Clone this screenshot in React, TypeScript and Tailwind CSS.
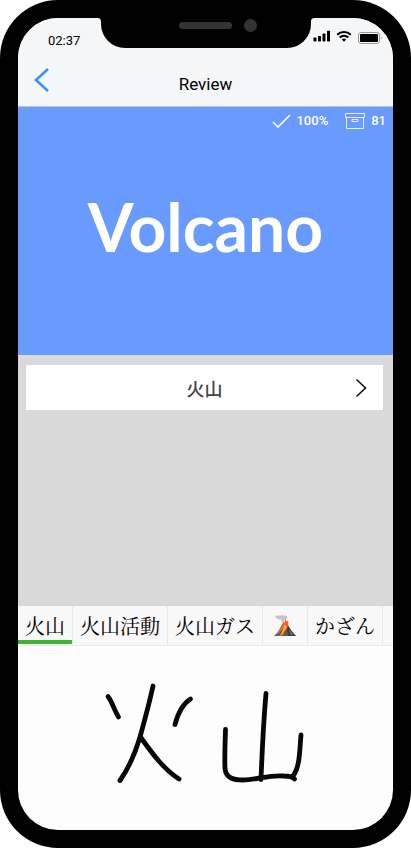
import type { ReactNode } from "react";

function StatusBar() {
  return (
    <div className="flex h-[30px] justify-between">
      <time className="w-[83px] pt-[15px] pl-[30px] font-[Roboto,sans-serif] text-[13px] leading-4 text-black">
        02:37
      </time>
      <div className="relative mx-auto flex w-[210px] items-start justify-center rounded-b-[24px] bg-black">
        <svg className="absolute top-0 -left-1 size-1" viewBox="0 0 4 4" aria-hidden="true">
          <path d="M0 0h4v4C4 1 3 0 0 0Z" />
        </svg>
        <svg className="absolute top-0 -right-1 size-1" viewBox="0 0 4 4" aria-hidden="true">
          <path d="M4 0H0v4C0 1 1 0 4 0Z" />
        </svg>
        <span className="mt-1 ml-[24px] h-[7px] w-[53px] rounded-full bg-[#333]" />
        <span className="mt-px ml-3 size-[13px] rounded-full bg-[#333]" />
      </div>
      <svg className="mt-3 mr-[9px] h-4 w-[73px]" viewBox="0 0 73 16" aria-hidden="true">
        <g>
          <rect x="2.500" y="7.500" width="3" height="4" rx=".8" />
          <rect x="7" y="6" width="3" height="5.500" rx=".8" />
          <rect x="11.500" y="3.500" width="3" height="8" rx=".8" />
          <rect x="16" y=".8" width="3" height="10.700" rx=".8" />
        </g>
        <g fill="none" stroke="#000" strokeWidth="2">
          <path d="M26.200 4.700a9.800 9.800 0 0 1 13.600 0" />
          <path d="M28.700 7.500a6 6 0 0 1 8.600 0" />
        </g>
        <path d="M30.800 9.500a3.400 3.400 0 0 1 4.400 0l-2.200 2.300Z" />
        <rect x="47.500" y="2.500" width="21" height="11" rx="2.500" fill="none" stroke="#999" />
        <rect x="49" y="4" width="18" height="8" rx="1" />
        <path d="M70 6.200v3.600q1.600-1.800 0-3.600" fill="#999" />
      </svg>
    </div>
  );
}

function VolcanoIcon() {
  return (
    <svg className="mx-[3px] size-6" viewBox="0 0 24 24" role="img" aria-label="Volcano">
      <path d="M1 22C4 20 7 15 9.500 9.500h5C16 14 19 19 23 22Z" fill="#5d5859" />
      <path d="M14 10c3 5 6 9 9 12h-8c0-4-2-7-1-12Z" fill="#3f3d42" />
      <path d="m3.500 20 4-6 .5 2-3 4Z" fill="#96918f" />
      <path d="m17 16 3 5h-2l-2-4Z" fill="#716c6c" />
      <path d="M9.500 10h5c1 3-.5 5-2 6.500-1.500 2-2 4-4 5.500H6c2-2 2.500-4 3-6-1.500 1-2 2-3 3 1.500-3 2.500-6 3.500-9Z" fill="#f0641f" />
      <path d="m11 11 2.500 1c0 3-3 5-4 8l-2 1.500c2-4 3.500-6 3.500-10.500Z" fill="#ffb637" />
      <path d="m9.500 10.500.5-3 1.500 1 .7-4 1.500 3 1.300-1 .5 4Z" fill="#f4682c" />
      <g fill="#c3c4c6">
        <circle cx="4" cy="2.800" r="1.600" />
        <circle cx="6.500" cy="3.600" r="2.100" />
        <circle cx="9.300" cy="2.800" r="1.900" />
        <circle cx="9.800" cy="5.800" r="1.900" />
        <circle cx="12.300" cy="3.300" r="1.900" />
      </g>
    </svg>
  );
}

const candidates: { id: string; content: ReactNode }[] = [
  { id: "kazan", content: "火山" },
  { id: "activity", content: "火山活動" },
  { id: "gas", content: "火山ガス" },
  { id: "emoji", content: <VolcanoIcon /> },
  { id: "kana", content: "かざん" },
];

export default function App() {
  return (
    <div className="flex min-h-screen flex-col bg-white pb-px">
      <div className="flex flex-1 flex-col rounded-[58px] bg-black p-[18px]">
        <main className="flex flex-1 flex-col overflow-hidden rounded-[40px] bg-[#fdfdfd]">
          <header className="border-b border-[#bfc1c5] bg-[#f5f6f8]">
            <StatusBar />
            <div className="grid h-[58px] grid-cols-3 items-center">
              <button type="button" aria-label="Back" className="w-12 pt-[6px] pl-4">
                <svg width="15" height="24" viewBox="0 0 15 24" fill="none" stroke="#3b93f7" strokeWidth="2.500">
                  <path d="M14 1 2 12 14 23" />
                </svg>
              </button>
              <h1 className="pt-[14px] text-center font-[Roboto,sans-serif] text-[17px] leading-6 text-black">
                Review
              </h1>
            </div>
          </header>

          <section className="flex h-[248px] flex-col bg-[#699bff] font-[Roboto,sans-serif] text-white">
            <div className="flex h-7 items-center justify-end pr-[7px] text-[13px] font-medium">
              <svg className="mr-[5px]" width="19" height="14" viewBox="0 0 19 14" fill="none" stroke="#fff" strokeWidth="1.600" aria-hidden="true">
                <path d="m1 8 5 5L18 1" />
              </svg>
              <span>100%</span>
              <svg className="mr-[6px] ml-[17px]" width="20" height="16" viewBox="0 0 20 16" fill="none" stroke="#fff" strokeOpacity=".85" aria-hidden="true">
                <path d="M.5 .5h19v4H.5Zm1 4v11h17v-11M7 6.500h6v2H7Z" />
              </svg>
              <span>81</span>
            </div>
            <h2 className="pt-[52px] text-center font-[Lato,sans-serif] text-[66px] leading-20 font-bold">
              Volcano
            </h2>
          </section>

          <section className="flex-1 bg-[#d9d9d9] py-[10px] pr-[10px] pl-2">
            <button type="button" className="grid h-[45px] w-full grid-cols-[1fr_auto_1fr] items-center bg-white">
              <span className="col-start-2 font-['Noto_Sans_CJK_JP',sans-serif] text-[18px] leading-6 font-medium text-[#444]">
                火山
              </span>
              <svg className="mr-4 justify-self-end" width="12" height="20" viewBox="0 0 12 20" fill="none" stroke="#111" strokeWidth="1.600" aria-hidden="true">
                <path d="m1.500 1.500 9 8.500-9 8.500" />
              </svg>
            </button>
          </section>

          <nav aria-label="Candidates" className="flex h-10 overflow-hidden border-b border-[#ececec] bg-[#f8f8f8]">
            {candidates.map((c, i) => (
              <button
                key={c.id}
                type="button"
                className={`flex shrink-0 items-center border-r border-[#e8e8e8] px-[7px] font-['Noto_Serif_CJK_JP','Noto_Sans_CJK_JP',serif] text-[20px] leading-6 font-normal text-black ${
                  i === 0 ? "shadow-[inset_0_-1px_#f8f8f8,inset_0_-5px_#3cb52c]" : ""
                }`}
              >
                {c.content}
              </button>
            ))}
          </nav>

          <div className="flex h-[184px] justify-center">
            <svg
              className="h-full w-full"
              viewBox="18 646 375 184"
              fill="none"
              stroke="#080808"
              strokeWidth="4.800"
              strokeLinecap="round"
              strokeLinejoin="round"
              role="img"
              aria-label="Handwritten 火山"
            >
              <path d="M108 696.500c4 5 6 13 10.500 20.500" />
              <path d="M153 686c-3 14-8 33-13 51-6 20-14 35-20 43.500" />
              <path d="M190.500 699c-8 5-13 16-15.500 25.500" />
              <path d="M140.500 737c12 17 24 33 38.500 42" />
              <path d="M225.500 729.500c-.5 14-1 28-.5 39 1 10 9 11.500 18 11.500 14 0 26-5.500 41-4 6 0 9 1 10.500 3" />
              <path d="M266 693.500c-2 23-4 60-5 86" />
              <path d="M301 735c-1.500 16-1 32-8 41" />
            </svg>
          </div>
        </main>
      </div>
    </div>
  );
}
